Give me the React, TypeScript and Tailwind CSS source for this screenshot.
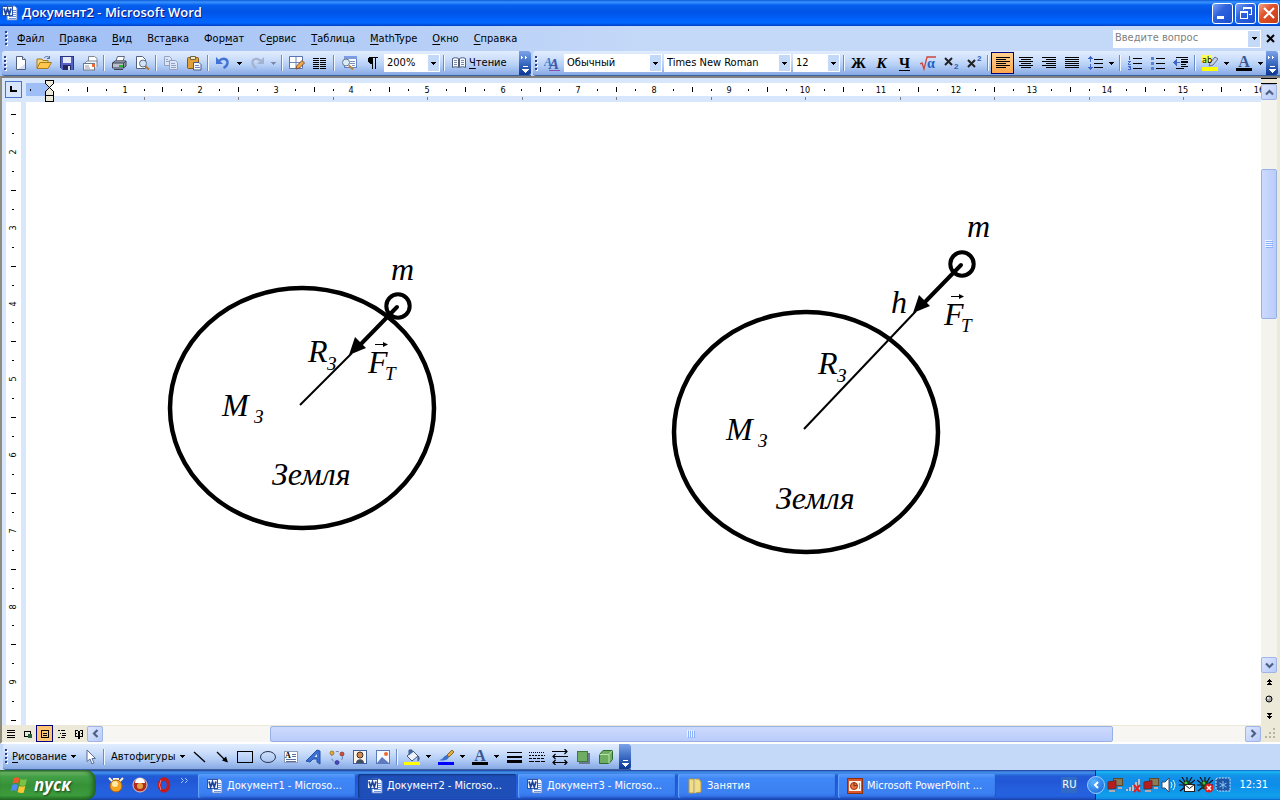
import { useState } from 'react';
import type { ReactNode } from 'react';
import clsx from 'clsx';

const BAR = 'bg-[linear-gradient(#e1edfe,#cfe0fb_30%,#b4cef6_60%,#86a8e4)]';

/* ---------- Small building blocks ---------- */

function Icon({ children, size = 16, smooth = false }: { children: ReactNode; size?: number; smooth?: boolean }) {
  return (
    <svg
      width={size}
      height={size}
      viewBox="0 0 16 16"
      fill="none"
      className="shrink-0"
      shapeRendering={smooth ? 'auto' : 'crispEdges'}
      aria-hidden="true"
    >
      {children}
    </svg>
  );
}

function Caret({ muted = false }: { muted?: boolean }) {
  return (
    <svg width="5" height="3" viewBox="0 0 5 3" shapeRendering="crispEdges" aria-hidden="true">
      <path d="M0 0h5v1H4v1H3v1H2V2H1V1H0z" fill={muted ? '#7f8ca8' : '#000'} />
    </svg>
  );
}

function Grip() {
  return (
    <span className="flex w-[7px] shrink-0 justify-center">
      <svg width="3" height="15" shapeRendering="crispEdges" aria-hidden="true">
        {[0, 4, 8, 12].map((y) => (
          <g key={y}>
            <rect x="1" y={y + 1} width="2" height="2" fill="#fff" />
            <rect x="0" y={y} width="2" height="2" fill="#27418e" />
          </g>
        ))}
      </svg>
    </span>
  );
}

function Sep() {
  return (
    <span className="flex w-[6px] shrink-0 justify-center">
      <span className="h-4 w-px bg-[#6a8ccb]" />
      <span className="h-4 w-px bg-[#f1f9ff]" />
    </span>
  );
}

function Tool({ label, children, active = false }: { label: string; children: ReactNode; active?: boolean }) {
  return (
    <button
      type="button"
      aria-label={label}
      className={clsx(
        'flex h-[22px] w-[23px] shrink-0 items-center justify-center border',
        active ? 'border-[#000080] bg-[linear-gradient(#ffd08f,#ffa64d)]' : 'border-transparent',
      )}
    >
      {children}
    </button>
  );
}

function Drop({ label, muted }: { label: string; muted?: boolean }) {
  return (
    <button type="button" aria-label={label} className="flex h-[22px] w-[11px] shrink-0 items-center justify-center">
      <Caret muted={muted} />
    </button>
  );
}

function BarEnd({ more = true }: { more?: boolean }) {
  return (
    <button
      type="button"
      aria-label="Параметры панели"
      className="flex w-3 shrink-0 flex-col items-center justify-between self-stretch rounded-r-[3px] bg-[linear-gradient(#7da4e8,#3d6cc4_50%,#0c3794)] pt-1 pb-[2px]"
    >
      <svg width="8" height="5" shapeRendering="crispEdges" aria-hidden="true">
        {more && <path d="M0 1h1v1h1v1H1v1H0zM4 1h1v1h1v1H5v1H4z" fill="#fff" />}
      </svg>
      <svg width="7" height="7" shapeRendering="crispEdges" aria-hidden="true">
        <path d="M1 0h5v1H1zM0 3h7v1H6v1H5v1H4v1H3V6H2V5H1V4H0z" fill="#fff" />
      </svg>
    </button>
  );
}

function Combo({ label, value, className }: { label: string; value: string; className: string }) {
  return (
    <span className={clsx('relative flex h-[18px] shrink-0', className)}>
      <select
        aria-label={label}
        defaultValue={value}
        className="w-full appearance-none rounded-none bg-white pr-3 pl-[3px] text-[11px] leading-[18px] text-black"
      >
        <option>{value}</option>
      </select>
      <span className="pointer-events-none absolute inset-y-px right-px flex w-[11px] items-center justify-center bg-[#c4d9f8]">
        <Caret />
      </span>
    </span>
  );
}

/* ---------- Icons ---------- */

const WordIcon = () => (
  <Icon smooth>
    <path d="M5 1h8l2 2v12H5z" fill="#fff" stroke="#5b7fc7" />
    <path d="M10 5.5h4M10 7.5h4M10 9.5h4M7 11.5h7M7 13.5h7" stroke="#6c93dc" />
    <rect x="0.5" y="1.5" width="10" height="9" fill="#f2f6ff" stroke="#2a55a8" />
    <path d="M2 3.5L3.7 9l1.8-5L7.300 9 9 3.500" stroke="#1d459c" strokeWidth="1.8" />
  </Icon>
);

const NewIcon = () => (
  <Icon smooth>
    <path d="M3.5 1.5h6l3 3v10h-9z" fill="#fff" stroke="#51607f" />
    <path d="M9.5 1.5v3h3" stroke="#51607f" fill="#d6e2f5" />
    <path d="M5 14h7V9z" fill="#d3e0f6" />
  </Icon>
);

const OpenIcon = () => (
  <Icon smooth>
    <path d="M1 13V4h5l1 1.5h5V8" fill="#f7d67c" stroke="#a97b16" />
    <path d="M1 13.5l3-6h11.5l-3.5 6z" fill="#ffc54d" stroke="#a97b16" />
    <path d="M8 3c2-2 4-2 5.5 0m0-2v2.5H11" stroke="#4b6a9b" />
  </Icon>
);

const SaveIcon = () => (
  <Icon>
    <path d="M1 1h14v14H3l-2-2z" fill="#5560c4" />
    <path d="M1 1h14v1H1zM1 1h1v12H1zM14 1h1v14h-1z" fill="#2b347f" />
    <rect x="4" y="2" width="8" height="6" fill="#e6ebfa" />
    <rect x="4" y="10" width="8" height="5" fill="#222a5e" />
    <rect x="9" y="11" width="2" height="4" fill="#d7def4" />
  </Icon>
);

const MailIcon = () => (
  <Icon smooth>
    <path d="M6.5 6V1.5h6l2.5 2V7" fill="#fff" stroke="#7d8797" />
    <path d="M2.5 15V8.5L5 6h10v6" fill="#f3f6fb" stroke="#7d8797" />
    <rect x="1.5" y="8.5" width="11" height="6.5" fill="#fff" stroke="#6e7889" />
    <path d="M3 11h4M3 13h5" stroke="#8d98ab" />
    <rect x="10" y="9" width="3" height="3" fill="#ec6c38" />
  </Icon>
);

const PrintIcon = () => (
  <Icon smooth>
    <path d="M5 6l1.5-4.5h7L12 6z" fill="#fff" stroke="#5c6a84" />
    <path d="M1.5 8L4 6h11l-2 2z" fill="#dfe3ea" stroke="#3b4354" />
    <path d="M1.5 8h11v5h-11z" fill="#b9c0cc" stroke="#3b4354" />
    <path d="M12.5 8L15 6v5l-2.5 2z" fill="#8e98a8" stroke="#3b4354" />
    <rect x="8" y="10" width="4" height="2" fill="#2fb32f" />
    <path d="M3 14.5h9" stroke="#3b4354" />
  </Icon>
);

const PreviewIcon = () => (
  <Icon smooth>
    <path d="M2.5 1.5h6l3 3v9h-9z" fill="#fff" stroke="#51607f" />
    <circle cx="9" cy="8.5" r="3.5" fill="#cfe4f8" stroke="#5d6c86" />
    <path d="M11.5 11.5l3.500 3" stroke="#b4763a" strokeWidth="2" />
  </Icon>
);

const CopyIcon = () => (
  <Icon smooth>
    <path d="M1.5 1.5h5l2 2v7h-7z" fill="#dde6f6" stroke="#93a2c3" />
    <path d="M6.5 5.5h6l2 2v7h-8z" fill="#dde6f6" stroke="#93a2c3" />
    <path d="M8 8.5h4M8 10.5h5M8 12.5h5M3 4.5h2M3 6.5h3" stroke="#93a2c3" />
  </Icon>
);

const PasteIcon = () => (
  <Icon smooth>
    <rect x="1.5" y="2.5" width="11" height="11" rx="1" fill="#e0a13a" stroke="#85590e" />
    <path d="M4.5 1.5h5v3h-5z" fill="#f4e9b8" stroke="#6f6540" />
    <path d="M7.5 7.5H13l2 2V15H7.5z" fill="#f4f7fd" stroke="#4a5c86" />
    <path d="M9 10.5h4M9 12.5h5" stroke="#6e86bd" />
  </Icon>
);

const UndoIcon = () => (
  <Icon smooth>
    <path d="M4 6c4-4 9-2 8.500 2-.3 2.500-2 4-4 5" stroke="#4273d4" strokeWidth="2.4" />
    <path d="M1 2v7h7z" fill="#4273d4" />
  </Icon>
);

const RedoIcon = () => (
  <Icon smooth>
    <path d="M12 6C8 2 3 4 3.500 8c.3 2.500 2 4 4 5" stroke="#a3b3d0" strokeWidth="2.2" />
    <path d="M15 2v7H8z" fill="#a3b3d0" />
  </Icon>
);

const TableIcon = () => (
  <Icon smooth>
    <path d="M.5 1.5h13v12H.5z" fill="#fff" stroke="#5a73ab" />
    <path d="M7 2v11M1 7.5h12" stroke="#6f87ba" />
    <path d="M7 14l1-3.5 5-5L15.5 8l-5 5z" fill="#e9a94d" stroke="#8a4a25" />
  </Icon>
);

const ColumnsIcon = () => (
  <Icon>
    <path d="M1 3h6v1H1zM8 3h6v1H8zM1 5h6v1H1zM8 5h6v1H8zM1 7h6v1H1zM8 7h6v1H8zM1 9h6v1H1zM8 9h6v1H8zM1 11h6v1H1zM8 11h6v1H8zM1 13h6v1H1zM8 13h6v1H8z" fill="#000" />
  </Icon>
);

const MapIcon = () => (
  <Icon smooth>
    <rect x="3.5" y="1.5" width="12" height="11" fill="#fff" stroke="#6382c4" />
    <rect x="3" y="1" width="13" height="3" fill="#7d9be0" />
    <path d="M9 6.5h5M9 8.5h5M11 10.5h3" stroke="#7b90bc" />
    <circle cx="5" cy="7.5" r="3.5" fill="#d9ecfa" stroke="#68778e" />
    <path d="M8 10.5l4 4" stroke="#b9823e" strokeWidth="2" />
  </Icon>
);

const PilcrowIcon = () => (
  <Icon>
    <path d="M5 2h9v1h-2v11h-1V3h-2v11H8V9H6V8H5V7H4V3h1z" fill="#000" />
  </Icon>
);

const BookIcon = () => (
  <Icon smooth>
    <path d="M1.5 3.5c2-1 4-1 6 0v9c-2-1-4-1-6 0zM8.500 3.500c2-1 4-1 6 0v9c-2-1-4-1-6 0z" fill="#f8faff" stroke="#4e5d7c" />
    <path d="M3 5.5h3M3 7.5h3M3 9.5h3M10 5.5h3M10 7.5h3M10 9.5h3" stroke="#7c8bab" />
  </Icon>
);

function AlignIcon({ widths, side = 'left' }: { widths: number[]; side?: 'left' | 'center' | 'right' }) {
  return (
    <Icon>
      {widths.map((w, i) => {
        const x = side === 'left' ? 1 : side === 'right' ? 15 - w : 8 - w / 2;
        return <rect key={i} x={x} y={2 + i * 2} width={w} height="1" fill="#000" />;
      })}
    </Icon>
  );
}

const SpacingIcon = () => (
  <Icon>
    <path d="M7 4h9v1H7zM7 8h9v1H7zM7 12h9v1H7z" fill="#000" />
    <path d="M3 1h1v1h1v1h1v1H4v3H3V4H1V3h1V2h1zM3 9h1v3h2v1H5v1H4v1H3v-1H2v-1H1v-1h2z" fill="#3f68c4" />
  </Icon>
);

const NumberedIcon = () => (
  <Icon>
    <path d="M6 3h9v1H6zM6 8h9v1H6zM6 13h9v1H6z" fill="#000" />
    <path d="M2 1h1v4H2zM1 6h3v1H3v1H2v1h2v1H1V8h1V7H1zM1 11h3v4H1v-1h2v-1H2v-1H1z" fill="#3f68c4" />
  </Icon>
);

const BulletsIcon = () => (
  <Icon>
    <path d="M6 3h9v1H6zM6 8h9v1H6zM6 13h9v1H6z" fill="#000" />
    <path d="M1 2h3v3H1zM1 7h3v3H1zM1 12h3v3H1z" fill="#5a82d4" />
  </Icon>
);

const IndentIcon = () => (
  <Icon>
    <path d="M3 2h12v1H3zM8 4h7v1H8zM8 6h7v2H8zM8 9h5v1H8zM8 11h7v1H8zM3 13h8v1H3z" fill="#000" />
    <path d="M0 7h1V6h1V5h1V4h1v3h3v1H4v3H3v-1H2V9H1V8H0z" fill="#3f68c4" />
  </Icon>
);

const PageIcon = ({ kind }: { kind: 'normal' | 'web' | 'print' | 'outline' | 'read' }) => (
  <svg width="10" height="10" viewBox="0 0 10 10" fill="#000" shapeRendering="crispEdges" aria-hidden="true">
    {kind === 'normal' && <path d="M1 1h8v1H1zM1 3h8v1H1zM1 6h8v1H1zM1 8h8v1H1z" />}
    {kind === 'web' && (
      <>
        <path d="M1 2h7v1H1zM1 2h1v6H1zM7 2h1v3H7zM1 7h4v1H1z" />
        <rect x="5" y="5" width="4" height="4" fill="#24603a" />
      </>
    )}
    {kind === 'print' && <path d="M1 1h8v1H1zM1 8h8v1H1zM1 1h1v8H1zM8 1h1v8H8zM3 4h4v1H3zM3 6h4v1H3z" />}
    {kind === 'outline' && <path d="M1 1h2v1H1zM4 1h4v1H4zM3 4h1v1H3zM5 4h4v1H5zM5 6h4v1H5zM1 8h2v1H1zM4 8h4v1H4z" />}
    {kind === 'read' && <path d="M1 1h1v7H1zM8 1h1v7H8zM4 2h1v8H4zM2 1h2v1H2zM6 1h2v1H6zM5 2h1v8H5zM2 7h2v1H2zM6 7h2v1H6zM2 4h1v1H2zM7 4h1v1H7z" />}
  </svg>
);

const FontColorIcon = ({ color }: { color: string }) => (
  <Icon>
    <text x="8" y="12" textAnchor="middle" fontSize="16" fontWeight="700" fontFamily="Liberation Serif, serif" fill="#3a5695">
      A
    </text>
    <rect x="0" y="13" width="16" height="3" fill={color} />
  </Icon>
);

/* ---------- Window chrome ---------- */

function TitleBar() {
  const box = 'flex h-[21px] w-[21px] items-center justify-center rounded-[3px] border border-white';
  const blue = 'bg-[linear-gradient(135deg,#7ba2f5,#2f62dd_40%,#1b4fd0)]';
  return (
    <header className="flex h-[26px] shrink-0 items-center bg-[linear-gradient(#0a59d8,#3a93ff_8%,#0560ee_20%,#0053e6_45%,#0062fc_75%,#0066ff_88%,#003fc4)] pr-px pl-[2px]">
      <WordIcon />
      <h1 className="ml-1 flex-1 font-['Open_Sans','Noto_Sans',sans-serif] text-[13px] font-semibold text-white [text-shadow:1px_1px_#0a1883]">
        Документ2 - Microsoft Word
      </h1>
      <div className="flex gap-[2px]">
        <button type="button" aria-label="Свернуть" className={clsx(box, blue)}>
          <Icon>
            <rect x="2" y="11" width="7" height="3" fill="#fff" />
          </Icon>
        </button>
        <button type="button" aria-label="Восстановить" className={clsx(box, blue)}>
          <Icon>
            <path d="M5 2h9v8h-3V9h2V4H6v1H5zM2 6h8v8H2zM3 8v5h6V8z" fillRule="evenodd" fill="#fff" />
          </Icon>
        </button>
        <button
          type="button"
          aria-label="Закрыть"
          className={clsx(box, 'bg-[linear-gradient(135deg,#f0a088,#e0522c_40%,#c83a12)]')}
        >
          <Icon smooth>
            <path d="M3 3l10 10M13 3L3 13" stroke="#fff" strokeWidth="2.2" />
          </Icon>
        </button>
      </div>
    </header>
  );
}

// [before, accelerator, after]
const MENU: [string, string, string][] = [
  ['', 'Ф', 'айл'],
  ['', 'П', 'равка'],
  ['', 'В', 'ид'],
  ['Вст', 'а', 'вка'],
  ['Фор', 'м', 'ат'],
  ['С', 'е', 'рвис'],
  ['', 'Т', 'аблица'],
  ['', 'M', 'athType'],
  ['', 'О', 'кно'],
  ['', 'С', 'правка'],
];

function MenuBar() {
  const [question, setQuestion] = useState('');
  return (
    <div className="flex h-[25px] shrink-0 items-center pl-[3px]">
      <Grip />
      <nav className="flex flex-1">
        {MENU.map(([pre, key, post]) => (
          <button key={pre + key + post} type="button" className="pr-2 pl-[7px] leading-4">
            {pre}
            <u className="underline-offset-2">{key}</u>
            {post}
          </button>
        ))}
      </nav>
      <div className="flex h-[18px] w-[148px] items-center bg-white p-px">
        <input
          aria-label="Введите вопрос"
          placeholder="Введите вопрос"
          value={question}
          onChange={(e) => setQuestion(e.target.value)}
          className="min-w-0 flex-1 pl-px text-[11px] outline-none placeholder:text-[#808080]"
        />
        <button type="button" aria-label="Список вопросов" className="flex h-4 w-3 items-center justify-center bg-[#c4d9f8]">
          <Caret />
        </button>
      </div>
      <button type="button" aria-label="Закрыть окно" className="flex w-[19px] justify-center">
        <svg width="9" height="9" aria-hidden="true">
          <path d="M1 1l7 7M8 1L1 8" stroke="#000" strokeWidth="2" />
        </svg>
      </button>
    </div>
  );
}

function StandardBar() {
  return (
    <div className={clsx('flex w-[529px] shrink-0 items-center rounded-l-[3px] border-b border-[#3b619c]', BAR)}>
      <Grip />
      <Tool label="Создать"><NewIcon /></Tool>
      <Tool label="Открыть"><OpenIcon /></Tool>
      <Tool label="Сохранить"><SaveIcon /></Tool>
      <Tool label="Сообщение"><MailIcon /></Tool>
      <Sep />
      <Tool label="Печать"><PrintIcon /></Tool>
      <Tool label="Предварительный просмотр"><PreviewIcon /></Tool>
      <Sep />
      <Tool label="Копировать"><CopyIcon /></Tool>
      <Tool label="Вставить"><PasteIcon /></Tool>
      <Sep />
      <Tool label="Отменить"><UndoIcon /></Tool>
      <Drop label="Список отмены" />
      <Tool label="Вернуть"><RedoIcon /></Tool>
      <Drop label="Список возврата" muted />
      <Sep />
      <Tool label="Таблицы и границы"><TableIcon /></Tool>
      <Tool label="Колонки"><ColumnsIcon /></Tool>
      <Sep />
      <Tool label="Схема документа"><MapIcon /></Tool>
      <Tool label="Непечатаемые знаки"><PilcrowIcon /></Tool>
      <Combo label="Масштаб" value="200%" className="mx-px w-[56px]" />
      <Sep />
      <button type="button" className="flex h-[22px] flex-1 items-center gap-[2px] pl-1 leading-4">
        <BookIcon />
        <span><u className="underline-offset-2">Ч</u>тение</span>
      </button>
      <BarEnd />
    </div>
  );
}

function FormatBar() {
  const letter = "font-['Liberation_Serif',serif] text-[15px] leading-4";
  return (
    <div className={clsx('ml-[2px] flex flex-1 items-center rounded-l-[3px] border-b border-[#3b619c]', BAR)}>
      <Grip />
      <Tool label="Стили и форматирование">
        <Icon smooth>
          <text x="0" y="11" fontSize="12" fontWeight="700" fontStyle="italic" fontFamily="Liberation Serif, serif" fill="#2f7cc8">A</text>
          <text x="5" y="14" fontSize="15" fontWeight="700" fontStyle="italic" fontFamily="Liberation Serif, serif" fill="#4458a8">A</text>
          <path d="M5 15.5h11" stroke="#8a4fb0" />
        </Icon>
      </Tool>
      <Combo label="Стиль" value="Обычный" className="mx-px w-[98px]" />
      <Combo label="Шрифт" value="Times New Roman" className="mx-px w-[127px]" />
      <Combo label="Размер шрифта" value="12" className="mx-px w-[47px]" />
      <Sep />
      <Tool label="Полужирный"><b className={letter}>Ж</b></Tool>
      <Tool label="Курсив"><i className={clsx(letter, 'font-bold')}>К</i></Tool>
      <Tool label="Подчеркнутый"><u className={clsx(letter, 'font-bold underline-offset-2')}>Ч</u></Tool>
      <Tool label="Формула">
        <Icon smooth>
          <path d="M0 9l2-1 2 6L7 2h9" stroke="#c9473c" strokeWidth="1.3" />
          <text x="7" y="13" fontSize="14" fontWeight="700" fontFamily="Liberation Serif, serif" fill="#1d62c8">α</text>
        </Icon>
      </Tool>
      <Tool label="Подстрочный знак">
        <Icon smooth>
          <path d="M2 3l7 7M9 3l-7 7" stroke="#222" strokeWidth="2" />
          <text x="11" y="14" fontSize="8" fontWeight="700" fontFamily="Liberation Sans, sans-serif" fill="#2f5cb8">2</text>
        </Icon>
      </Tool>
      <Tool label="Надстрочный знак">
        <Icon smooth>
          <path d="M2 5l7 7M9 5l-7 7" stroke="#222" strokeWidth="2" />
          <text x="11" y="6" fontSize="8" fontWeight="700" fontFamily="Liberation Sans, sans-serif" fill="#2f5cb8">2</text>
        </Icon>
      </Tool>
      <Sep />
      <Tool label="По левому краю" active><AlignIcon widths={[14, 10, 14, 10, 14, 10]} /></Tool>
      <Tool label="По центру"><AlignIcon widths={[14, 10, 14, 10, 14, 10]} side="center" /></Tool>
      <Tool label="По правому краю"><AlignIcon widths={[14, 10, 14, 10, 14, 10]} side="right" /></Tool>
      <Tool label="По ширине"><AlignIcon widths={[14, 14, 14, 14, 14, 14]} /></Tool>
      <Tool label="Междустрочный интервал"><SpacingIcon /></Tool>
      <Drop label="Выбор интервала" />
      <Sep />
      <Tool label="Нумерация"><NumberedIcon /></Tool>
      <Tool label="Маркеры"><BulletsIcon /></Tool>
      <Tool label="Уменьшить отступ"><IndentIcon /></Tool>
      <Sep />
      <Tool label="Выделение цветом">
        <Icon smooth>
          <rect x="0" y="0" width="10" height="8" fill="#ffff52" />
          <path d="M7 11l1-3 5-6 3 2-5 6z" fill="#c7d2e4" stroke="#5f6e88" />
          <text x="0" y="8" fontSize="9" fontFamily="DejaVu Sans Condensed, sans-serif" fill="#000">ab</text>
          <rect x="0" y="12" width="16" height="4" fill="#ffff00" />
        </Icon>
      </Tool>
      <Drop label="Цвет выделения" />
      <Tool label="Цвет шрифта"><FontColorIcon color="#000" /></Tool>
      <Drop label="Выбор цвета шрифта" />
      <BarEnd />
    </div>
  );
}

/* ---------- Rulers ---------- */

const CM = 75.6;

function TopRuler() {
  const quarters = Array.from({ length: 67 }, (_, i) => i);
  return (
    <div className="flex h-6 shrink-0 bg-[#d8e7fc]">
      <div className="flex w-6 shrink-0 items-start pt-[3px] pl-[3px]">
        <button
          type="button"
          aria-label="Тип табуляции"
          className="flex h-[17px] w-[17px] items-center justify-center border border-[#4a74c9] bg-[#d8e7fc]"
        >
          <svg width="7" height="7" shapeRendering="crispEdges" aria-hidden="true">
            <path d="M0 0h2v4h5v2H0z" fill="#000" />
          </svg>
        </button>
      </div>
      <svg className="h-6 min-w-0 flex-1" shapeRendering="crispEdges" aria-hidden="true">
        <rect y="5" width="100%" height="13" fill="#fff" />
        <rect y="5" width="23" height="13" fill="#9ebef5" />
        <rect x="4" y="11" width="1" height="2" fill="#000" />
        {quarters.slice(1).map((q) => {
          const x = Math.round(23 + (q * CM) / 4);
          if (q % 4 === 0) {
            return (
              <text key={q} x={x} y="15" textAnchor="middle" fontSize="9" className="font-['DejaVu_Sans_Condensed',sans-serif]">
                {q / 4}
              </text>
            );
          }
          return <rect key={q} x={x} y={q % 2 ? 11 : 9} width="1" height={q % 2 ? 2 : 5} fill="#000" />;
        })}
        {Array.from({ length: 12 }, (_, i) => (
          <rect key={i} x={Math.round(23 + (i + 1) * 94.5)} y="19" width="1" height="3" fill="#808080" />
        ))}
        <path d="M19.5 2.5h8v3l-4 4 4 4v4h-8v-4l4-4-4-4z" fill="#ece9d8" stroke="#000" />
        <path d="M19.5 17.5h8v6h-8z" fill="#ece9d8" stroke="#000" />
      </svg>
    </div>
  );
}

function SideRuler() {
  return (
    <div className="flex w-6 shrink-0 bg-[#d8e7fc] pr-[5px] pl-1">
      <svg className="h-full w-full" shapeRendering="crispEdges" aria-hidden="true">
        <rect width="100%" height="100%" fill="#fff" />
        {Array.from({ length: 34 }, (_, i) => {
          const q = i + 6;
          const y = Math.round(50 + ((q - 8) * 75.75) / 4);
          if (q % 4 === 0) {
            return (
              <text
                key={q}
                textAnchor="middle"
                fontSize="9"
                transform={`translate(10 ${y}) rotate(-90)`}
                className="font-['DejaVu_Sans_Condensed',sans-serif]"
              >
                {q / 4}
              </text>
            );
          }
          return <rect key={q} x={q % 2 ? 6 : 5} y={y} width={q % 2 ? 2 : 5} height="1" fill="#000" />;
        })}
      </svg>
    </div>
  );
}

/* ---------- Drawing on the page ---------- */

function Label({ x, y, children, small = false }: { x: number; y: number; children: string; small?: boolean }) {
  return (
    <text x={x} y={y} fontSize={small ? 19 : 32} fontStyle="italic" fontFamily="Liberation Serif, Times New Roman, serif">
      {children}
    </text>
  );
}

function Force({ x, y }: { x: number; y: number }) {
  return (
    <g transform={`translate(${x} ${y})`}>
      <Label x={0} y={0}>F</Label>
      <Label x={17} y={7} small>T</Label>
      <path d="M7-28.5h11" stroke="#000" />
      <path d="M20-28.500l-5-2.500v5z" />
    </g>
  );
}

// Coordinates are relative to the centre of the planet.
function Planet({ children }: { children: ReactNode }) {
  return (
    <>
      <ellipse rx="132" ry="120" fill="none" stroke="#000" strokeWidth="4.5" />
      <Label x={-80} y={8}>M</Label>
      <Label x={-48} y={15} small>З</Label>
      <Label x={-30} y={77}>Земля</Label>
      {children}
    </>
  );
}

function Satellite({ x, y }: { x: number; y: number }) {
  return (
    <g transform={`translate(${x} ${y})`}>
      <circle r="11.7" fill="none" stroke="#000" strokeWidth="4" />
      <path d="M-1 1L-38 39" stroke="#000" strokeWidth="4" strokeLinecap="round" />
      <path d="M-49 49l6-18 11 11z" />
    </g>
  );
}

function Page() {
  return (
    <svg className="min-w-0 flex-1 bg-white" role="img" aria-label="Сила тяжести">
      <g transform="translate(276 306)">
        <Planet>
          <path d="M-2-3L50-55" stroke="#000" strokeWidth="2" />
          <Satellite x={96} y={-102} />
          <Label x={6} y={-46}>R</Label>
          <Label x={25} y={-38} small>З</Label>
          <Label x={89} y={-128}>m</Label>
          <Force x={66} y={-35} />
        </Planet>
      </g>
      <g transform="translate(780 330)">
        <Planet>
          <path d="M-2-3L110-121" stroke="#000" strokeWidth="2" />
          <Satellite x={156} y={-168} />
          <Label x={12} y={-58}>R</Label>
          <Label x={31} y={-50} small>З</Label>
          <Label x={85} y={-119}>h</Label>
          <Label x={161} y={-195}>m</Label>
          <Force x={138} y={-107} />
        </Planet>
      </g>
    </svg>
  );
}

/* ---------- Scrolling ---------- */

function ScrollButton({ label, d }: { label: string; d: string }) {
  return (
    <button
      type="button"
      aria-label={label}
      className="flex h-4 w-4 shrink-0 items-center justify-center rounded-[2px] border border-[#9fb5e8] bg-[linear-gradient(135deg,#dce6fe,#b9cbf8)]"
    >
      <svg width="9" height="9" viewBox="0 0 9 9" fill="none" className="shrink-0" aria-hidden="true">
        <path d={d} stroke="#4d6185" strokeWidth="2.2" />
      </svg>
    </button>
  );
}

function VerticalScroll() {
  const tiny = 'flex h-[17px] w-4 items-center justify-center';
  return (
    <div className="flex w-[19px] shrink-0 flex-col items-start bg-[#ece9d8]">
      <div className="h-[6px] w-4 shrink-0 border-t border-b border-black bg-[#ece9d8]" />
      <ScrollButton label="Вверх" d="M1 6.500L4.500 3 8 6.500" />
      <div className="flex w-4 flex-1 flex-col bg-[#f4f3ee]">
        <div className="flex-[69]" />
        <div className="flex flex-[149] items-center justify-center rounded-[2px] border border-[#98b1e4] bg-[linear-gradient(90deg,#cddafd,#b9ccfa)]">
          <svg width="8" height="8" shapeRendering="crispEdges" aria-hidden="true">
            <path d="M0 0h7v1H0zM0 2h7v1H0zM0 4h7v1H0zM0 6h7v1H0z" fill="#eef4fe" />
            <path d="M1 1h7v1H1zM1 3h7v1H1zM1 5h7v1H1zM1 7h7v1H1z" fill="#8cb0f8" />
          </svg>
        </div>
        <div className="flex-[340]" />
      </div>
      <ScrollButton label="Вниз" d="M1 2.500L4.500 6 8 2.500" />
      <button type="button" aria-label="Предыдущая страница" className={tiny}>
        <svg width="5" height="6" shapeRendering="crispEdges" aria-hidden="true">
          <path d="M2 0h1v1h1v1h1v1H3v1h1v1h1v1H0V5h1V4h1V3H0V2h1V1h1z" />
        </svg>
      </button>
      <button type="button" aria-label="Выбор объекта перехода" className={tiny}>
        <svg width="8" height="8" aria-hidden="true">
          <circle cx="4" cy="4" r="3" fill="#aaa" stroke="#000" />
          <circle cx="3" cy="3" r="1" fill="#fff" />
        </svg>
      </button>
      <button type="button" aria-label="Следующая страница" className={tiny}>
        <svg width="5" height="6" shapeRendering="crispEdges" aria-hidden="true">
          <path d="M0 0h5v1H4v1H3v1h2v1H4v1H3v1H2V5H1V4H0V3h2V2H1V1H0z" />
        </svg>
      </button>
      <div className="flex h-[18px] w-full items-end pb-[2px] pl-1">
        <svg width="12" height="12" fill="#b8b4a3" shapeRendering="crispEdges" aria-hidden="true">
          <path d="M8 0h2v2H8zM4 4h2v2H4zM8 4h2v2H8zM0 8h2v2H0zM4 8h2v2H4zM8 8h2v2H8z" />
        </svg>
      </div>
    </div>
  );
}

const VIEWS = [
  { kind: 'normal', label: 'Обычный режим' },
  { kind: 'web', label: 'Режим веб-документа' },
  { kind: 'print', label: 'Режим разметки' },
  { kind: 'outline', label: 'Режим структуры' },
  { kind: 'read', label: 'Режим чтения' },
] as const;

function HorizontalScroll() {
  const [view, setView] = useState<string>('print');
  return (
    <div className="flex h-[17px] shrink-0 items-center bg-[#ece9d8]">
      {VIEWS.map((v) => (
        <button
          key={v.kind}
          type="button"
          aria-label={v.label}
          onClick={() => setView(v.kind)}
          className={clsx(
            'flex h-[17px] w-[17px] items-center justify-center border',
            v.kind === view ? 'border-[#000080] bg-[#ffc573]' : 'border-transparent',
          )}
        >
          <PageIcon kind={v.kind} />
        </button>
      ))}
      <ScrollButton label="Влево" d="M6.500 1L3 4.500 6.500 8" />
      <div className="flex h-4 flex-1 bg-[#f7f6f3]">
        <div className="flex-[167]" />
        <div className="flex flex-[842] items-center justify-center rounded-[2px] border border-[#98b1e4] bg-[linear-gradient(#cddafd,#b9ccfa)]">
          <svg width="8" height="8" shapeRendering="crispEdges" aria-hidden="true">
            <path d="M0 0h1v7H0zM2 0h1v7H2zM4 0h1v7H4zM6 0h1v7H6z" fill="#eef4fe" />
            <path d="M1 1h1v7H1zM3 1h1v7H3zM5 1h1v7H5zM7 1h1v7H7z" fill="#8cb0f8" />
          </svg>
        </div>
        <div className="flex-[132]" />
      </div>
      <ScrollButton label="Вправо" d="M2.500 1L6 4.500 2.500 8" />
    </div>
  );
}

/* ---------- Drawing toolbar ---------- */

function DrawingBar() {
  return (
    <div className="flex h-[26px] shrink-0 bg-[#c4d8f8] pl-[3px]">
      <div className={clsx('flex w-[628px] items-center rounded-l-[3px] border-b border-[#3b619c]', BAR)}>
        <Grip />
        <button type="button" className="flex h-[22px] w-[68px] items-center justify-between px-[2px] leading-4">
          <span><u className="underline-offset-2">Р</u>исование</span>
          <Caret />
        </button>
        <Tool label="Выбор объектов">
          <Icon smooth>
            <path d="M5 1v11.500l3-2.500 2 5 2-1-2-4.500h3.500z" fill="#fff" stroke="#5a6d92" />
          </Icon>
        </Tool>
        <Sep />
        <button type="button" className="flex h-[22px] w-[80px] shrink-0 items-center justify-between pr-[2px] pl-1 leading-4">
          <span>Автофи<u className="underline-offset-2">г</u>уры</span>
          <Caret />
        </button>
        <Tool label="Линия">
          <Icon smooth><path d="M3 3l11 10" stroke="#000" strokeWidth="1.3" /></Icon>
        </Tool>
        <Tool label="Стрелка">
          <Icon smooth>
            <path d="M3 3l9 9" stroke="#000" strokeWidth="1.3" />
            <path d="M14 13.500l-6-2 4-4z" fill="#000" />
          </Icon>
        </Tool>
        <Tool label="Прямоугольник">
          <Icon><path d="M.5 2.5h15v11H.5z" stroke="#000" /></Icon>
        </Tool>
        <Tool label="Овал">
          <Icon smooth><ellipse cx="8" cy="8" rx="7.5" ry="5.5" stroke="#2a3550" /></Icon>
        </Tool>
        <Tool label="Надпись">
          <Icon>
            <path d="M1.5 2.5h13v11h-13z" fill="#fff" stroke="#8e9cb9" />
            <text x="2" y="9" fontSize="8" fontWeight="700" fontFamily="Liberation Serif, serif" fill="#000">A</text>
            <path d="M9 5h4v1H9zM9 7h4v1H9zM3 10h10v1H3zM3 12h10v1H3z" fill="#5a6fa0" />
          </Icon>
        </Tool>
        <Tool label="Объект WordArt">
          <Icon smooth>
            <path d="M0 12L11 1l3 1v13l-3-2v-3H7l-3 3z" fill="#3b6ed0" stroke="#2450a8" />
            <path d="M8.500 8H11V5z" fill="#dbe8fb" />
          </Icon>
        </Tool>
        <Tool label="Диаграмма">
          <Icon smooth>
            <circle cx="8" cy="8" r="5.5" stroke="#5d77ab" strokeDasharray="3 3" />
            <circle cx="3" cy="4" r="2" fill="#f0a832" stroke="#7a5510" strokeWidth=".6" />
            <circle cx="13" cy="5" r="2" fill="#d84c36" stroke="#70231a" strokeWidth=".6" />
            <circle cx="8" cy="13.500" r="2" fill="#4a48c4" stroke="#22206e" strokeWidth=".6" />
          </Icon>
        </Tool>
        <Tool label="Картинка">
          <Icon smooth>
            <rect x="1.5" y="1.5" width="13" height="13" fill="#fdf6e6" stroke="#3f5f9e" />
            <circle cx="8" cy="6" r="3" fill="#d38b52" stroke="#3d3430" />
            <path d="M4 14c0-5 8-5 8 0z" fill="#434c60" />
          </Icon>
        </Tool>
        <Tool label="Рисунок">
          <Icon smooth>
            <rect x="1.5" y="1.5" width="13" height="13" fill="#f5f9ff" stroke="#5b7cbc" />
            <circle cx="11" cy="5" r="2" fill="#ef6a34" />
            <path d="M2 14l5-6 7 6z" fill="#5e7bc0" />
          </Icon>
        </Tool>
        <Sep />
        <Tool label="Цвет заливки">
          <Icon smooth>
            <path d="M3 7l6-5 5 5-6 5z" fill="#eef3fc" stroke="#47597f" />
            <path d="M5 6V1h3v3M14 7c2 2 1 4 0 5z" stroke="#47597f" fill="#3a72c8" />
            <rect x="0" y="13" width="16" height="3" fill="#ffff00" />
          </Icon>
        </Tool>
        <Drop label="Выбор цвета заливки" />
        <Tool label="Цвет линий">
          <Icon smooth>
            <path d="M1 11c4 0 4-4 8-5l2 2c-2 4-6 4-10 3z" fill="#3b6fce" />
            <path d="M9 6l5-5 2 2-5 5z" fill="#e4ac45" stroke="#8b6524" />
            <rect x="0" y="13" width="16" height="3" fill="#0000ff" />
          </Icon>
        </Tool>
        <Drop label="Выбор цвета линий" />
        <Tool label="Цвет шрифта"><FontColorIcon color="#000" /></Tool>
        <Drop label="Выбор цвета шрифта" />
        <Tool label="Тип линии">
          <Icon><path d="M1 3h15v1H1zM1 7h15v2H1zM1 11h15v3H1z" fill="#000" /></Icon>
        </Tool>
        <Tool label="Тип штриха">
          <Icon>
            <path d="M0 3.5h16" stroke="#000" strokeDasharray="1 1" />
            <path d="M0 6.5h16" stroke="#000" strokeDasharray="2 1" />
            <path d="M0 9.5h16" stroke="#000" strokeDasharray="3 1" />
            <path d="M0 12.5h16" stroke="#000" strokeDasharray="5 1" />
          </Icon>
        </Tool>
        <Tool label="Вид стрелки">
          <Icon smooth>
            <path d="M0 2.5h15M1 7.5h15M1 13.5h14" stroke="#000" />
            <path d="M12.500 0L15 2.500 12.500 5M3.500 5L1 7.500 3.500 10M3.500 11L1 13.500 3.500 16M12.500 11l2.500 2.500-2.500 2.500" stroke="#000" strokeWidth="1.2" />
          </Icon>
        </Tool>
        <Tool label="Стиль тени">
          <Icon>
            <rect x="4" y="4" width="11" height="11" fill="#6b7894" />
            <rect x="2.5" y="2.5" width="10" height="10" fill="#6fae62" stroke="#3d7a3c" />
          </Icon>
        </Tool>
        <Tool label="Объем">
          <Icon smooth>
            <path d="M1.500 5.500L5 1.500h9.500v9L11 14.500H1.500z" fill="#6dae60" stroke="#2c6a30" />
            <path d="M1.500 5.500H11v9M11 5.500l3.500-4" stroke="#bfe2b2" />
          </Icon>
        </Tool>
        <span className="flex-1" />
        <BarEnd more={false} />
      </div>
    </div>
  );
}

/* ---------- Taskbar ---------- */

const FolderIcon = () => (
  <Icon smooth>
    <path d="M2 1h5v14H2zM8 1h4l2 3v10l-6 1z" fill="#f3de85" stroke="#b8993c" />
    <path d="M8 1v14" stroke="#fff3b8" />
  </Icon>
);

const PowerPointIcon = () => (
  <Icon smooth>
    <rect x=".5" y=".5" width="15" height="15" fill="#d9562a" stroke="#8e2f12" />
    <rect x="2" y="3" width="12" height="10" fill="#fff3ea" />
    <circle cx="7" cy="8" r="3.5" fill="#e8733c" stroke="#9c3413" />
    <path d="M7 8V4.500M7 8l3-1M12 6h1M12 8h1M12 10h1" stroke="#7e2a10" />
  </Icon>
);

const TASKS = [
  { title: 'Документ1 - Microsо...', icon: WordIcon },
  { title: 'Документ2 - Microsо...', icon: WordIcon, active: true },
  { title: 'Документ3 - Microsо...', icon: WordIcon },
  { title: 'Занятия', icon: FolderIcon },
  { title: 'Microsoft PowerPoint ...', icon: PowerPointIcon },
];

const NetIcon = () => (
  <Icon smooth>
    <rect x="6.5" y="1.5" width="9" height="7" fill="#8d7a54" stroke="#5c4a2c" />
    <path d="M1 5l8-1.500v8L1 12z" fill="#b81c1c" stroke="#6a2c2c" />
    <path d="M2 14h6M11 11h4" stroke="#b9a9a9" strokeWidth="2" />
  </Icon>
);

const Bug = () => (
  <>
    <path d="M0 3l5 4M3 0l3 5M8 0v5M13 0l-3 5M16 3l-5 4M0 8h5M16 8h-5M1 14l5-4M15 14l-5-4" stroke="#111" strokeWidth="1.2" />
    <ellipse cx="8" cy="8" rx="4" ry="4.5" fill="#1d3f1c" />
    <circle cx="7" cy="6" r="1.5" fill="#3ec83e" />
  </>
);

function Tray() {
  return (
    <div className="flex items-center gap-[2px] self-stretch border-l border-[#092e78] bg-[linear-gradient(#0c59b9,#1fa4f0_4%,#18b5f2_7%,#149be9_14%,#1290e8_24%,#0d8dea_50%,#119fec_85%,#1192e5_95%,#095bc9)] pr-3">
      <button
        type="button"
        aria-label="Показать скрытые значки"
        className="-ml-[9px] flex h-[18px] w-[18px] items-center justify-center rounded-full border border-[#9cd0ff] bg-[radial-gradient(circle_at_35%_30%,#5ab4ff,#0e5fd8)]"
      >
        <svg width="6" height="8" fill="none" aria-hidden="true">
          <path d="M5 1L2 4l3 3" stroke="#fff" strokeWidth="2" />
        </svg>
      </button>
      <NetIcon />
      <Icon smooth>
        <path d="M2 14v-2M5 14v-4M8 14V8M11 14V5M14 14V2" stroke="#5c6c80" strokeWidth="2.6" />
        <path d="M2 14v-2M5 14v-4M8 14V8M11 14V5M14 14V2" stroke="#dfe6ee" strokeWidth="1.4" />
        <path d="M9 8l6 7M15 8l-6 7" stroke="#e02020" strokeWidth="2" />
      </Icon>
      <NetIcon />
      <Icon smooth>
        <path d="M1 5h3l4-4v14l-4-4H1z" fill="#fff" stroke="#3c4b60" />
        <path d="M10 5q2 3 0 6M12 3q4 5 0 10" stroke="#d8ffe0" />
      </Icon>
      <Icon smooth>
        <Bug />
        <rect x="5.5" y="7.5" width="10" height="7" fill="#fff" stroke="#222" />
        <path d="M5.500 7.500l5 4 5-4" stroke="#222" />
      </Icon>
      <Icon smooth>
        <Bug />
        <circle cx="12" cy="11" r="4.5" fill="#e31b1b" />
        <path d="M10 9l4 4M14 9l-4 4" stroke="#fff" strokeWidth="1.5" />
      </Icon>
      <Icon smooth>
        <path d="M1 2l2-1h12v13H3l-2-2z" fill="#1c56a4" stroke="#cfe3fa" strokeDasharray="2 1" />
        <path d="M8 4v8M4.500 6l7 4M11.500 6l-7 4" stroke="#8cc4f4" />
      </Icon>
      <time className="ml-[6px] text-white">12:31</time>
    </div>
  );
}

function Taskbar() {
  return (
    <footer className="flex h-[30px] shrink-0 items-center bg-[linear-gradient(#1f2f86,#3165c4_3%,#3682e5_6%,#4490e6_10%,#3883e5_12%,#2b71e0_15%,#2663da_18%,#235bd6_20%,#2157d6_38%,#245ddb_54%,#2562df_86%,#2158d4_92%,#1941a5)]">
      <button
        type="button"
        className="flex h-[30px] w-24 shrink-0 items-center gap-1 rounded-r-[10px] bg-[linear-gradient(#2c6e2a,#6cb466_8%,#43a047_22%,#379137_50%,#3c9c3c_85%,#256e25)] pl-[10px] shadow-[inset_-3px_0_4px_#1f5f22]"
      >
        <Icon size={20} smooth>
          <path d="M3 2.500q2.500-1.500 4.500 0L6.500 7Q4.500 5.500 2 7z" fill="#ee5a28" />
          <path d="M8.500 3q2.500 1.500 5 0L12.500 8q-2.500 1.500-5 0z" fill="#7cc242" />
          <path d="M1.800 8q2.500-1.500 4.500 0L5 13Q3 11.500.5 13z" fill="#4d8cf0" />
          <path d="M7.300 8.500q2.500 1.500 5 0L11 14q-2.500 1-5-.5z" fill="#fbc62f" />
        </Icon>
        <span className="font-['Open_Sans','Noto_Sans',sans-serif] text-[17px] leading-5 font-bold text-white italic [text-shadow:1px_1px_2px_#15401a]">
          пуск
        </span>
      </button>
      <div className="flex w-[102px] shrink-0 items-center gap-2 pl-3">
        <button type="button" aria-label="QIP">
          <Icon smooth>
            <path d="M1 1l4 4M15 1l-4 4M5 2h6" stroke="#fff2d0" strokeWidth="2" />
            <circle cx="8" cy="9" r="6" fill="#f7a420" stroke="#b86207" />
            <circle cx="7" cy="7" r="3" fill="#ffe9a8" />
          </Icon>
        </button>
        <button type="button" aria-label="Download Master">
          <Icon smooth>
            <circle cx="8" cy="8" r="7" fill="#b02a22" stroke="#e9c7b4" />
            <path d="M3 6a5 5 0 0110 0z" fill="#fff" />
            <circle cx="8" cy="9" r="3" fill="#e4a040" />
          </Icon>
        </button>
        <button type="button" aria-label="Opera">
          <Icon smooth>
            <ellipse cx="8" cy="8" rx="4.5" ry="6" stroke="#c41c1c" strokeWidth="3.5" />
            <path d="M5 3q-3 5 0 10" stroke="#f28080" />
          </Icon>
        </button>
        <button type="button" aria-label="Ещё" className="self-start">
          <svg width="9" height="7" fill="none" aria-hidden="true">
            <path d="M1 1l2.500 2.500L1 6M5 1l2.500 2.500L5 6" stroke="#a8ccff" />
          </svg>
        </button>
      </div>
      <div className="flex flex-1 gap-[2px]">
        {TASKS.map(({ title, icon: TaskIcon, active }) => (
          <button
            key={title}
            type="button"
            className={clsx(
              'mt-[2px] flex h-6 w-[158px] min-w-0 items-center gap-1 rounded-[2px] pl-[9px] text-white',
              active
                ? 'bg-[#1e4fb8] shadow-[inset_1px_1px_2px_#10337f]'
                : 'bg-[linear-gradient(#5a9bfa,#3f86f6_20%,#3b80f2_80%,#2f6be0)] shadow-[inset_1px_0_1px_#6aa6ff,inset_-1px_-1px_1px_#1f55c4]',
            )}
          >
            <TaskIcon />
            <span className="truncate">{title}</span>
          </button>
        ))}
      </div>
      <button type="button" aria-label="Язык: RU" className="mr-[18px] bg-[#316ac5] px-px leading-4 text-white">
        RU
      </button>
      <Tray />
    </footer>
  );
}

export default function App() {
  return (
    <div className="flex h-screen flex-col overflow-hidden font-['DejaVu_Sans_Condensed','Noto_Sans',sans-serif] text-[11px] text-black select-none">
      <TitleBar />

      {/* Menu and toolbars */}
      <div className="shrink-0 bg-[linear-gradient(90deg,#9ebef5,#c4d8f8_50%)]">
        <MenuBar />
        <div className="flex h-[25px] pl-[2px]">
          <StandardBar />
          <FormatBar />
        </div>
      </div>

      {/* Document window */}
      <main className="flex min-h-0 flex-1 border-t-2 border-b-2 border-l-2 border-t-[#808080] border-b-white border-l-[#8f8c80]">
        <div className="flex min-w-0 flex-1 flex-col">
          <TopRuler />
          <div className="flex min-h-0 flex-1">
            <SideRuler />
            <Page />
          </div>
          <HorizontalScroll />
        </div>
        <VerticalScroll />
      </main>

      <DrawingBar />
      <Taskbar />
    </div>
  );
}
